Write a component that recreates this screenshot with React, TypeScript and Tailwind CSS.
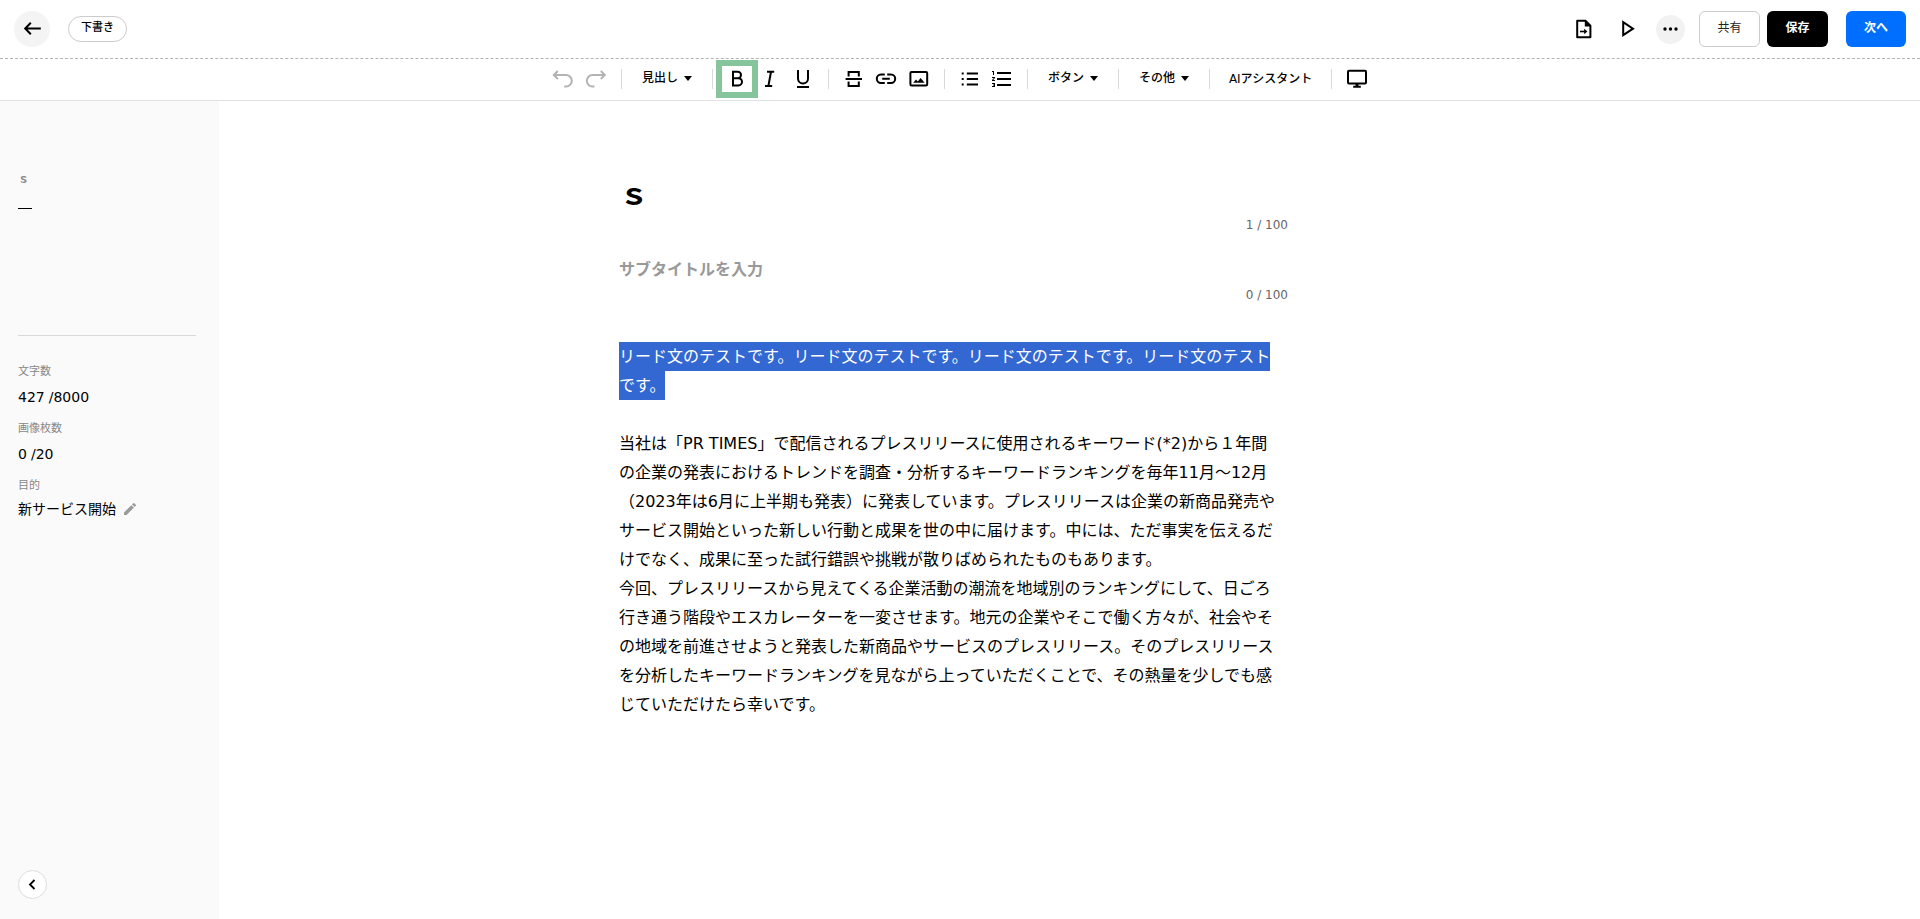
/**
 * Press Release Editor
 * Top bar, formatting toolbar, stats sidebar and the document body
 */

import React from 'react';
import { MdEdit, MdFormatListNumbered } from 'react-icons/md';

interface IconProps {
  children: React.ReactNode;
}

const Icon: React.FC<IconProps> = ({ children }) => (
  <svg
    viewBox="0 0 24 24"
    className="w-6 h-6 shrink-0"
    fill="none"
    stroke="currentColor"
    strokeWidth="2"
    aria-hidden="true"
  >
    {children}
  </svg>
);

interface ToolButtonProps {
  label: string;
  disabled?: boolean;
  highlighted?: boolean;
  children: React.ReactNode;
}

const ToolButton: React.FC<ToolButtonProps> = ({ label, disabled, highlighted, children }) => (
  <button
    type="button"
    aria-label={label}
    disabled={disabled}
    className={`relative w-[33px] h-8 pl-1 flex items-center ${disabled ? 'text-[#b3b3b3]' : 'text-black'}`}
  >
    {children}
    {highlighted && (
      <span className="absolute -left-[5px] -top-[3px] w-[42px] h-[38px] border-6 border-[#86c59b]" />
    )}
  </button>
);

const Divider: React.FC = () => <span className="w-px h-5 mx-2 bg-[#d9d9d9]" />;

const MenuButton: React.FC<{ label: string }> = ({ label }) => (
  <button
    type="button"
    aria-haspopup="menu"
    className="h-8 px-3 pb-0.5 flex items-center gap-1.5 text-xs font-medium whitespace-nowrap"
  >
    {label}
    <svg viewBox="0 0 8 5" className="w-2 h-[5px]" aria-hidden="true">
      <path d="M0 0h8L4 5z" fill="currentColor" />
    </svg>
  </button>
);

const Header: React.FC = () => (
  <header className="h-[59px] px-[14px] flex items-center justify-between border-b border-dashed border-[#b3b3b3]">
    <div className="flex items-center gap-[18px]">
      <button
        type="button"
        aria-label="戻る"
        className="w-9 h-9 rounded-full bg-[#f4f4f4] flex items-center justify-center"
      >
        <Icon>
          <path d="M10.8 5.7L5.2 11.5l5.6 5.8M5.2 11.5h15.6" />
        </Icon>
      </button>
      <span className="h-[26px] px-3 pb-0.5 flex items-center rounded-full border border-[#ccc] text-[11px] font-medium">
        下書き
      </span>
    </div>

    <div className="flex items-center">
      <button type="button" aria-label="書き出し" className="mr-5">
        <Icon>
          <path d="M5.2 3.8h8.2l5 5v11.4H5.2z" strokeLinejoin="round" />
          <path d="M12.8 3.5v6h6z" fill="currentColor" stroke="none" />
          <path d="M8 14.5h5.5" strokeWidth="1.6" />
          <path d="M12.2 11.8l3.2 2.7-3.2 2.7z" fill="currentColor" stroke="none" />
        </Icon>
      </button>
      <button type="button" aria-label="プレビュー" className="mr-4">
        <Icon>
          <path d="M7.2 5.2v13L17 11.7z" />
        </Icon>
      </button>
      <button
        type="button"
        aria-label="メニュー"
        className="w-[29px] h-[29px] mr-[14px] rounded-full bg-[#f2f2f2] flex items-center justify-center"
      >
        <svg viewBox="0 0 15 4" className="w-[15px] h-1" aria-hidden="true">
          <circle cx="2" cy="2" r="1.7" />
          <circle cx="7.5" cy="2" r="1.7" />
          <circle cx="13" cy="2" r="1.7" />
        </svg>
      </button>
      <button
        type="button"
        className="w-[61px] h-9 mr-[7px] pb-0.5 rounded-md border border-[#ccc] text-xs text-[#222]"
      >
        共有
      </button>
      <button type="button" className="w-[61px] h-9 mr-[18px] pb-0.5 rounded-md bg-black text-xs font-bold text-white">
        保存
      </button>
      <button type="button" className="w-[60px] h-9 pb-0.5 rounded-md bg-[#006fff] text-xs font-bold text-white">
        次へ
      </button>
    </div>
  </header>
);

const Toolbar: React.FC = () => (
  <div
    role="toolbar"
    aria-label="書式"
    className="h-[42px] pb-px flex items-center justify-center border-b border-[#e2e2e2]"
  >
    <ToolButton label="元に戻す" disabled>
      <Icon>
        <path d="M6.8 4L2.8 8l4 4M3 8h12a5.8 5.8 0 0 1 0 11.6h-1.8" />
      </Icon>
    </ToolButton>
    <ToolButton label="やり直す" disabled>
      <Icon>
        <path d="M16.8 4l4 4-4 4M20.6 8h-12a5.8 5.8 0 0 0 0 11.6h1.8" />
      </Icon>
    </ToolButton>
    <Divider />
    <MenuButton label="見出し" />
    <Divider />
    <ToolButton label="太字" highlighted>
      <Icon>
        <path d="M8 4.8h4.8a3.2 3.2 0 0 1 0 6.4H8M8 11.2h5.4a3.6 3.6 0 0 1 0 7.2H8zM8 3.8v15.6" />
      </Icon>
    </ToolButton>
    <ToolButton label="斜体">
      <Icon>
        <path d="M9 4.8h7.2M7 19h7.2M13 4.8L10.4 19" />
      </Icon>
    </ToolButton>
    <ToolButton label="下線">
      <Icon>
        <path d="M7 3v8.4a5 5 0 0 0 10 0V3M6 20h12" />
      </Icon>
    </ToolButton>
    <Divider />
    <ToolButton label="区切り線">
      <Icon>
        <path d="M4.6 12h16.4M7.6 9.5V5h10.2v4.5M7.6 14.5V19h10.2v-4.5" />
      </Icon>
    </ToolButton>
    <ToolButton label="リンク">
      <Icon>
        <path d="M10.8 16H7a4.2 4.2 0 0 1 0-8.4h3.8M13.2 7.6H17a4.2 4.2 0 0 1 0 8.4h-3.8M8.2 11.8h7.6" />
      </Icon>
    </ToolButton>
    <ToolButton label="画像">
      <Icon>
        <rect x="3.4" y="5" width="16.8" height="13.4" rx="1.2" />
        <path d="M6.2 15.8l2.8-3.4 1.8 2.2 2.8-3.6 4 4.8z" fill="currentColor" stroke="none" />
      </Icon>
    </ToolButton>
    <Divider />
    <ToolButton label="箇条書き">
      <Icon>
        <path d="M4.7 6.5h2M4.7 12h2M4.7 17.5h2M9.8 6.5H21M9.8 12H21M9.8 17.5H21" />
      </Icon>
    </ToolButton>
    <ToolButton label="番号付きリスト">
      <MdFormatListNumbered className="w-6 h-6" />
    </ToolButton>
    <Divider />
    <MenuButton label="ボタン" />
    <Divider />
    <MenuButton label="その他" />
    <Divider />
    <button type="button" className="w-[105px] h-8 text-xs font-medium whitespace-nowrap">
      AIアシスタント
    </button>
    <Divider />
    <ToolButton label="表示切替">
      <Icon>
        <rect x="4" y="3.8" width="18" height="12.8" rx="1" />
        <path d="M13 16.6v3M9.2 19.8h7.6" />
        <path d="M11.5 17h3v2.5h-3z" fill="currentColor" stroke="none" />
      </Icon>
    </ToolButton>
  </div>
);

const Sidebar: React.FC = () => (
  <aside className="w-[219px] shrink-0 pt-[71px] pb-5 pl-[18px] pr-[23px] flex flex-col bg-[#fafafa]">
    <p className="text-[11px] leading-4 font-bold text-[#888]">ｓ</p>
    <span className="w-[14px] h-px mt-5 bg-black" />
    <hr className="mt-[126px] border-[#d9d9d9]" />

    <dl className="mt-7 text-sm leading-5">
      <dt className="text-[11px] leading-4 text-[#888]">文字数</dt>
      <dd className="mt-[7px] flex gap-1">
        <span>427</span>
        <span>/8000</span>
      </dd>
      <dt className="mt-[14px] text-[11px] leading-4 text-[#888]">画像枚数</dt>
      <dd className="mt-[7px] flex gap-1">
        <span>0</span>
        <span>/20</span>
      </dd>
      <dt className="mt-[14px] text-[11px] leading-4 text-[#888]">目的</dt>
      <dd className="mt-[7px] flex items-center gap-1.5 leading-4">
        新サービス開始
        <button type="button" aria-label="目的を編集">
          <MdEdit className="w-4 h-4 text-[#999]" />
        </button>
      </dd>
    </dl>

    <button
      type="button"
      aria-label="サイドバーを閉じる"
      className="w-[29px] h-[29px] mt-auto flex items-center justify-center rounded-full border border-[#ddd] bg-white"
    >
      <svg viewBox="0 0 11 11" className="w-[11px] h-[11px]" aria-hidden="true">
        <path d="M7.5 1L3 5.5 7.5 10" fill="none" stroke="currentColor" strokeWidth="1.8" />
      </svg>
    </button>
  </aside>
);

const Editor: React.FC = () => (
  <main className="flex-1 pr-[232px]">
    <div className="max-w-[669px] mx-auto pt-[73px]">
      <input
        type="text"
        aria-label="タイトル"
        defaultValue="ｓ"
        className="block w-full h-10 text-[30px] font-bold outline-none"
      />
      <p className="mt-0.5 text-right text-xs leading-[18px] text-[#666]">1 / 100</p>
      <input
        type="text"
        aria-label="サブタイトル"
        placeholder="サブタイトルを入力"
        className="block w-full h-6 mt-6 text-base font-bold placeholder:text-[#999] outline-none"
      />
      <p className="mt-1 text-right text-xs leading-[18px] text-[#666]">0 / 100</p>

      <div className="mt-[38px] pr-2 text-base leading-[29px]">
        <p className="mb-[29px]">
          <mark className="py-[5px] bg-[#3367d1] text-white">
            リード文のテストです。リード文のテストです。リード文のテストです。リード文のテストです。
          </mark>
        </p>
        <p>
          当社は「PR TIMES」で配信されるプレスリリースに使用されるキーワード(*2)から１年間の企業の発表におけるトレンドを調査・分析するキーワードランキングを毎年11月～12月（2023年は6月に上半期も発表）に発表しています。プレスリリースは企業の新商品発売やサービス開始といった新しい行動と成果を世の中に届けます。中には、ただ事実を伝えるだけでなく、成果に至った試行錯誤や挑戦が散りばめられたものもあります。
        </p>
        <p>
          今回、プレスリリースから見えてくる企業活動の潮流を地域別のランキングにして、日ごろ行き通う階段やエスカレーターを一変させます。地元の企業やそこで働く方々が、社会やその地域を前進させようと発表した新商品やサービスのプレスリリース。そのプレスリリースを分析したキーワードランキングを見ながら上っていただくことで、その熱量を少しでも感じていただけたら幸いです。
        </p>
      </div>
    </div>
  </main>
);

export default function App() {
  return (
    <div
      lang="ja"
      className="min-h-screen flex flex-col bg-white text-black font-['DejaVu_Sans','Noto_Sans_CJK_JP',sans-serif]"
    >
      <Header />
      <Toolbar />
      <div className="flex-1 flex">
        <Sidebar />
        <Editor />
      </div>
    </div>
  );
}
